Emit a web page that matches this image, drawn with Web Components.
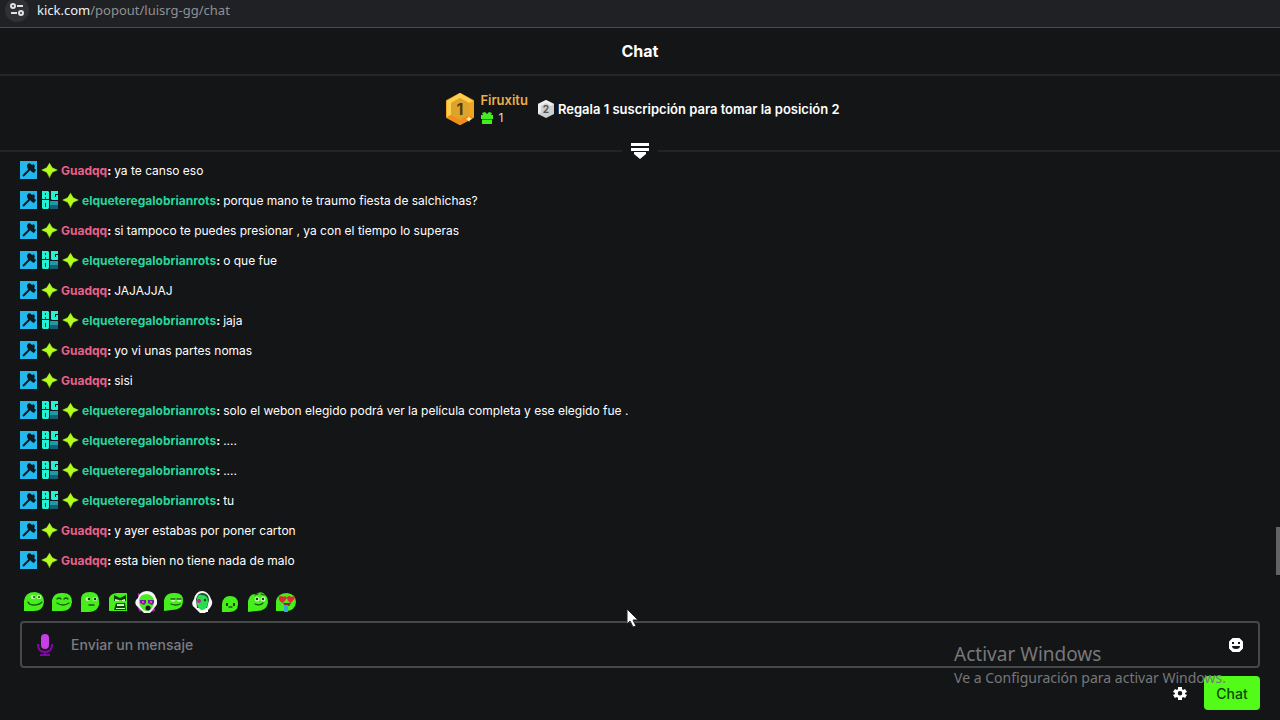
<!DOCTYPE html>
<html lang="es">
<head>
<meta charset="utf-8">
<title>Chat</title>
<style>
  html, body { margin: 0; height: 100%; background: #141517; }
  body { font-family: Inter, "Liberation Sans", sans-serif; color: #fff; overflow: hidden; }
</style>
</head>
<body>
<chat-popout></chat-popout>

<template id="emotes">
  <style>
    :host { display: flex; gap: 4px; padding: 0 22px; }
    button { width: 24px; height: 24px; padding: 1px; border: 0; background: none; }
    svg { display: block; width: 22px; height: 22px; }
    .b { fill: #46ee1c; }
    .k { fill: none; stroke: #165a0c; stroke-width: 1.3; stroke-linecap: round; }
    .w { fill: #c4ffb4; }
    .d { fill: #123f0b; }
  </style>
  <button aria-label="sonrisa"><svg viewBox="0 0 22 22"><path class="b" d="M1 20V10Q2 1 12 1Q21 2 21 11Q20 20 11 20Z"/><ellipse class="w" cx="10" cy="6" rx="2.5" ry="2"/><ellipse class="w" cx="16" cy="6" rx="2.5" ry="2"/><circle class="d" cx="11" cy="6" r="1"/><circle class="d" cx="16" cy="6" r="1"/><path class="k" d="M5 11q1 3 6 3t8-3"/></svg></button>
  <button aria-label="feliz"><svg viewBox="0 0 22 22"><path class="b" d="M1 20V9Q3 1 12 2Q21 2 21 11Q20 20 11 20Z"/><path class="k" d="M6 8q2-2 4 0M13 8q2-2 4 0M6 12q6 4 12 0"/></svg></button>
  <button aria-label="serio"><svg viewBox="0 0 22 22"><path class="b" d="M2 21V10Q1 1 11 1Q20 1 20 10V14Q18 21 10 21Z"/><ellipse class="w" cx="9" cy="8" rx="2.5" ry="2"/><ellipse class="w" cx="16" cy="8" rx="2.5" ry="2"/><circle class="d" cx="10" cy="8" r="1.3"/><circle class="d" cx="16" cy="8" r="1.3"/><path class="k" d="M10 14h5"/></svg></button>
  <button aria-label="enojado"><svg viewBox="0 0 22 22"><path class="b" d="M2 20V7Q4 2 11 2H20V20Z"/><path class="d" d="M7 4l6 3 6-3v6l-5-1H12l-5 1zM9 12h9l1 7H7z"/><path class="w" d="M8 8l4 1v1H8zM15 9l3-1v2h-3zM10 13h7v2h-7zM9 17h9v1H9z"/></svg></button>
  <button aria-label="fiesta"><svg viewBox="0 0 22 22"><path fill="#b729b9" d="M3 2l5 2-5 5zM2 15l6 2-3 4zM19 15l1 5-5 1z"/><path fill="#f5f5f5" d="M3 7Q5 0 12 0Q19 0 21 7Q24 12 20 16L15 22H9L3 16Q-1 14 1 9Z"/><path class="b" d="M4 9Q5 3 12 3Q19 4 19 11Q18 20 11 20Q4 18 4 9Z"/><path fill="#781cab" d="M5 9h6v3l-2 2-4-2zM13 9h6v3l-2 2-4-2z"/><path fill="#fa3bc6" d="M7 10h2v2H7zM15 10h2v2h-2z"/><ellipse cx="13" cy="17" rx="2.5" ry="2.5" fill="#27152c"/></svg></button>
  <button aria-label="contento"><svg viewBox="0 0 22 22"><path class="b" d="M1 20V9Q3 1 12 2Q21 2 20 11Q19 19 9 19Z"/><ellipse class="w" cx="10" cy="9" rx="2.5" ry="1.7"/><ellipse class="w" cx="16" cy="9" rx="2.5" ry="1.7"/><path class="k" d="M8 8h4M14 8h4M8 13q5 2 9 0"/></svg></button>
  <button aria-label="auriculares"><svg viewBox="0 0 22 22"><path fill="#f7f7f7" d="M3 8Q5 0 11 0Q17 0 20 8Q23 12 19 17L14 22H9L4 17Q-1 14 3 8Z"/><path fill="#185626" d="M5 8Q7 1 12 2Q18 3 18 9L16 17H6Z"/><path fill="#28de50" d="M6 9Q6 3 11 4Q17 4 17 11Q16 20 10 19Q5 16 6 9Z"/><circle cx="8" cy="10" r="2" fill="#c62291"/><path fill="#fff" d="M11 19h6v2h-5z"/><circle class="d" cx="14" cy="9" r="1.2"/></svg></button>
  <button aria-label="pequeño"><svg viewBox="0 0 22 22"><path class="b" d="M3 21V13Q4 5 11 5Q19 5 19 13Q19 21 10 21Z"/><path class="d" d="M7 12h2v3H7zM14 12h2v3h-2z"/><path class="k" d="M10 16h3"/></svg></button>
  <button aria-label="pensativo"><svg viewBox="0 0 22 22"><path class="b" d="M1 21V10Q3 2 9 3Q15-1 18 4Q21 6 21 12Q19 20 10 20Z"/><ellipse class="w" cx="10" cy="8" rx="2.5" ry="2.5"/><ellipse class="w" cx="16" cy="8" rx="2.5" ry="2.5"/><circle class="d" cx="10" cy="8" r="1.2"/><circle class="d" cx="16" cy="8" r="1.2"/><path class="k" d="M8 4l3-1M14 3l3 1M8 13q5 2 8-1"/></svg></button>
  <button aria-label="enamorado"><svg viewBox="0 0 22 22"><path class="b" d="M1 20V10Q3 2 12 2Q21 3 21 11Q20 20 11 20Z"/><path fill="#e72437" d="M4 6q3-2 4 0 3-2 4 1l-4 5q-5-2-4-6zM12 6q3-2 4 0 4-2 4 1l-4 5q-4-2-4-6z"/><path fill="#8e271d" d="M8 12h8l-2 3h-4z"/><path fill="#35a7df" d="M9 14h4v7H9z"/></svg></button>
</template>

<script>
class ChatBadge extends HTMLElement {
  constructor() {
    super();
    this.attachShadow({ mode: 'open' });
  }

  get icon() {
    switch (this.getAttribute('type')) {
      case 'mod':
        return `<path fill="#25b8ec" d="M0 0h17v18H0z"/>
          <path fill="none" stroke="#101a20" stroke-width="2" d="M3 15l7-7"/>
          <path fill="#101a20" d="M7 4l2-2 2 1 1 1 2-1 1 3-1 1 2 2-2 3-2-1-2-2-2-1-1-2z"/>`;
      case 'og':
        return `<path fill="#25f2d2" d="M1 0h6l1 1v7H1zM1 9h7v8l-1 1H2l-1-1zM10 0h7v3h-3v3h1V4h2v5h-6l-1-1z"/>
          <path fill="#12403f" d="M4 2h1v2H4zM4 6h1v2H4zM4 12h1v4H4z"/>
          <path fill="#1c9aab" d="M9 10h8v4H9z"/><path fill="#156078" d="M9 14h8v4H9z"/>`;
      default:
        return `<path fill="#6fae12" d="M9 1l3 5 6 3-6 3-3 6-3-6-6-3 6-3z"/>
          <path fill="#b5fb20" d="M9 2l3 5 5 2-5 2-3 5-3-5-5-2 5-2z"/>`;
    }
  }

  connectedCallback() {
    this.shadowRoot.innerHTML = `
      <style>
        :host { display: block; width: 18px; height: 18px; margin-right: 3px; }
        :host([type=star]) { width: 17px; }
        svg { display: block; width: 18px; height: 18px; }
        :host([type=star]) svg { width: 17px; }
      </style>
      <svg viewBox="0 0 18 18" aria-hidden="true">${this.icon}</svg>
    `;
  }
}
customElements.define('chat-badge', ChatBadge);

class ChatMessage extends HTMLElement {
  constructor() {
    super();
    this.attachShadow({ mode: 'open' });
  }

  connectedCallback() {
    const og = this.hasAttribute('og');
    this.shadowRoot.innerHTML = `
      <style>
        :host { display: flex; flex: none; align-items: center; height: 30px; padding: 0 20px; font-size: 12px; white-space: nowrap; }
        b { font-weight: 700; color: ${og ? '#27d69c' : '#e8618c'}; }
        .sep { font-weight: 700; margin-right: 3px; }
      </style>
      <chat-badge type="mod"></chat-badge>
      ${og ? '<chat-badge type="og"></chat-badge>' : ''}
      <chat-badge type="star"></chat-badge>
      <b>${this.getAttribute('user')}</b><span class="sep">:</span>
      <span><slot></slot></span>
    `;
  }
}
customElements.define('chat-message', ChatMessage);

class AddressBar extends HTMLElement {
  constructor() {
    super();
    this.attachShadow({ mode: 'open' });
    this.shadowRoot.innerHTML = `
      <style>
        :host { display: flex; align-items: center; gap: 8px; box-sizing: border-box; height: 28px; padding: 0 5px 8px;
          background: #202124; border-bottom: 1px solid #4b4c4e; font: 13px "Noto Sans", sans-serif; color: #8f9194; }
        svg { width: 24px; height: 24px; flex: none; }
        span span { color: #f1f1f1; }
      </style>
      <svg viewBox="0 0 24 24" fill="none" stroke="#e2e2e2" stroke-width="2" aria-hidden="true">
        <circle cx="12" cy="12" r="12" fill="#303134" stroke="none"/>
        <circle cx="8" cy="8" r="2"/><path d="M12 8h6M6 15h6"/><circle cx="16" cy="15" r="2"/>
      </svg>
      <span><span>kick.com</span>/popout/luisrg-gg/chat</span>
    `;
  }
}
customElements.define('address-bar', AddressBar);

class GiftBoard extends HTMLElement {
  constructor() {
    super();
    this.attachShadow({ mode: 'open' });
    this.shadowRoot.innerHTML = `
      <style>
        :host { display: block; }
        .top { display: flex; justify-content: center; align-items: center; height: 65px; padding-left: 6px; }
        .medal { width: 28px; height: 34px; margin-right: 6px; }
        .name { font-size: 13px; font-weight: 600; line-height: 18px; color: #e9ae4b; }
        .gifts { display: flex; align-items: center; gap: 4px; font-size: 12px; line-height: 18px; color: #ddd; }
        .gifts svg { width: 14px; height: 14px; }
        .rank { width: 16px; height: 18px; margin: 0 4px 0 10px; }
        .call { font-size: 13px; font-weight: 600; }
        .fold { display: flex; align-items: center; gap: 6px; height: 20px; margin-bottom: -6px; }
        .fold i { flex: 1; height: 2px; background: #222426; }
        button { display: block; width: 24px; height: 20px; padding: 0 2px; border: 0; background: none; }
        button svg { display: block; width: 20px; height: 20px; }
        text { font-family: Inter, sans-serif; font-weight: 700; text-anchor: middle; }
      </style>
      <div class="top">
        <svg class="medal" viewBox="0 0 28 34">
          <path fill="#efa51e" stroke="#efa51e" stroke-width="2" stroke-linejoin="round" d="M14 2L27 9V25L14 32L1 25V9Z"/>
          <path fill="#ffce4a" d="M14 1L27 9L23 11L14 6L5 11V23L1 25V9Z"/>
          <path fill="#dda42c" d="M14 6L23 11V23L14 28L5 23V11Z"/>
          <path fill="#f48a18" d="M1 25l4-2 9 5 9-5 4 2-13 8z"/>
          <path fill="#fff3b4" d="M23 24l1 2 2 1-2 1-1 2-1-2-2-1 2-1z"/>
          <text x="14" y="23" font-size="16" fill="#573807">1</text>
        </svg>
        <div>
          <div class="name">Firuxitu</div>
          <div class="gifts">
            <svg viewBox="0 0 14 14"><path fill="#42ed20" d="M2 2l3-1 2 2 2-2 3 1-1 2h2v4H1V4h2zM2 9h10v4H2z"/><path fill="#168d12" d="M2 8h10v1H2z"/></svg>
            <span>1</span>
          </div>
        </div>
        <svg class="rank" viewBox="0 0 16 18">
          <path fill="#cfcfcf" d="M8 0L16 4V14L8 18L0 14V4Z"/><path fill="#eee" d="M8 0L16 4L13 6L8 3L3 6V12L0 14V4Z"/>
          <text x="8" y="13" font-size="10" fill="#555">2</text>
        </svg>
        <span class="call">Regala 1 suscripción para tomar la posición 2</span>
      </div>
      <div class="fold">
        <i></i>
        <button aria-label="Mostrar"><svg viewBox="0 0 20 20" fill="#fff"><path d="M1 2h18v3H1zM1 7h18v3H1zM4 11h12v2l-6 5-6-5z"/></svg></button>
        <i></i>
      </div>
    `;
  }
}
customElements.define('gift-board', GiftBoard);

class EmoteBar extends HTMLElement {
  constructor() {
    super();
    this.attachShadow({ mode: 'open' });
    this.shadowRoot.appendChild(document.getElementById('emotes').content.cloneNode(true));
  }
}
customElements.define('emote-bar', EmoteBar);

class MessageBox extends HTMLElement {
  constructor() {
    super();
    this.attachShadow({ mode: 'open' });
    this.shadowRoot.innerHTML = `
      <style>
        :host { display: block; padding: 0 20px 10px; }
        .field { display: flex; align-items: center; box-sizing: border-box; height: 47px; padding: 0 14px;
          border: 2px solid #47484a; border-radius: 4px; }
        label { display: flex; margin-right: 17px; }
        input { flex: 1; min-width: 0; padding: 0; border: 0; outline: 0; background: none; color: #fff; font: 500 14px Inter, sans-serif; }
        input::placeholder { color: #7b7d80; opacity: 1; }
        .actions { display: flex; justify-content: flex-end; align-items: center; gap: 16px; margin-top: 8px; }
        button { display: flex; align-items: center; justify-content: center; padding: 0; border: 0; background: none; }
        .send { width: 56px; height: 34px; border-radius: 4px; background: #53fc18; color: #0c4a0c; font: 500 14px Inter, sans-serif; }
      </style>
      <div class="field">
        <label for="msg" aria-label="Mensaje">
          <svg width="18" height="24" viewBox="0 0 18 24">
            <path d="M2 11v2q1 6 7 6t7-6v-2M9 19v3M4 22h10" fill="none" stroke="#7b0b9e" stroke-width="2"/>
            <rect x="5" y="1" width="8" height="15" rx="4" fill="#c93de6"/>
          </svg>
        </label>
        <input id="msg" placeholder="Enviar un mensaje">
        <button aria-label="Emotes">
          <svg width="16" height="16" viewBox="0 0 16 16"><path fill="#fff" d="M5 2h6l3 3v6l-3 3H5l-3-3V5z" stroke="#fff" stroke-width="2" stroke-linejoin="round"/><path fill="#141517" d="M4 5h2v2H4zM10 5h2v2h-2zM4 9h8q0 3-4 3T4 9z"/></svg>
        </button>
      </div>
      <div class="actions">
        <button aria-label="Ajustes">
          <svg width="16" height="16" viewBox="0 0 16 16"><path fill="#fff" fill-rule="evenodd" d="M6 2h4v2l1 1 2-1 2 3-2 1v1l2 1-2 3-2-1-1 1v2H6v-2l-1-1-2 1-2-3 2-1V8L1 7l2-3 2 1 1-1zM8 6a2 2 0 1 0 0 4.5a2 2 0 1 0 0-4.5z"/></svg>
        </button>
        <button class="send">Chat</button>
      </div>
    `;
  }
}
customElements.define('message-box', MessageBox);

class ChatPopout extends HTMLElement {
  constructor() {
    super();
    this.attachShadow({ mode: 'open' });
    this.shadowRoot.innerHTML = `
      <style>
        :host { display: flex; flex-direction: column; height: 100vh; position: relative; overflow: hidden; }
        h1 { margin: 0; font-size: 16px; font-weight: 700; line-height: 46px; text-align: center; border-bottom: 2px solid #242628; }
        main { flex: 1; min-height: 0; display: flex; flex-direction: column; justify-content: flex-end; }
        emote-bar { margin: 15px 0 7px; }
        .thumb { position: absolute; right: 0; top: 527px; width: 4px; height: 48px; background: #626365; }
        .windows { position: absolute; right: 54px; bottom: 31px; font: 14px/22px "Noto Sans", sans-serif; color: #77787a; pointer-events: none; }
        .windows div { font-size: 19px; line-height: 26px; }
        .cursor { position: absolute; left: 626px; top: 608px; width: 14px; height: 20px; }
        .windows, .cursor { z-index: 1; }
      </style>
      <address-bar></address-bar>
      <h1>Chat</h1>
      <gift-board></gift-board>
      <main>
        <chat-message user="Guadqq">ya te canso eso</chat-message>
        <chat-message user="elqueteregalobrianrots" og>porque mano te traumo fiesta de salchichas?</chat-message>
        <chat-message user="Guadqq">si tampoco te puedes presionar , ya con el tiempo lo superas</chat-message>
        <chat-message user="elqueteregalobrianrots" og>o que fue</chat-message>
        <chat-message user="Guadqq">JAJAJJAJ</chat-message>
        <chat-message user="elqueteregalobrianrots" og>jaja</chat-message>
        <chat-message user="Guadqq">yo vi unas partes nomas</chat-message>
        <chat-message user="Guadqq">sisi</chat-message>
        <chat-message user="elqueteregalobrianrots" og>solo el webon elegido podrá ver la película completa y ese elegido fue .</chat-message>
        <chat-message user="elqueteregalobrianrots" og>....</chat-message>
        <chat-message user="elqueteregalobrianrots" og>....</chat-message>
        <chat-message user="elqueteregalobrianrots" og>tu</chat-message>
        <chat-message user="Guadqq">y ayer estabas por poner carton</chat-message>
        <chat-message user="Guadqq">esta bien no tiene nada de malo</chat-message>
      </main>
      <emote-bar></emote-bar>
      <message-box></message-box>
      <div class="thumb"></div>
      <div class="windows"><div>Activar Windows</div>Ve a Configuración para activar Windows.</div>
      <svg class="cursor" viewBox="0 0 14 20"><path fill="#fff" stroke="#222" d="M1 1v15l3-3 3 6 3-1-3-6h5z"/></svg>
    `;
  }
}
customElements.define('chat-popout', ChatPopout);
</script>
</body>
</html>
